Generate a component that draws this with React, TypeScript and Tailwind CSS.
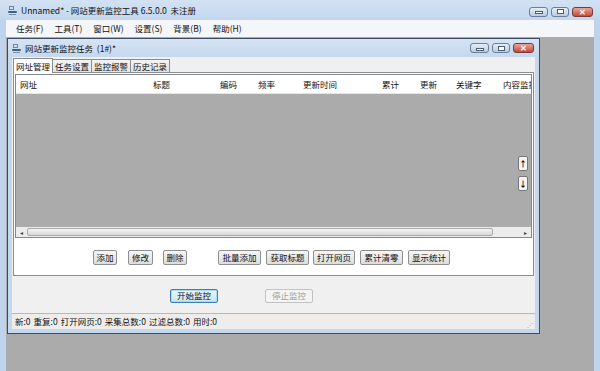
import React from "react";

const FONT = { fontFamily: '"Noto Sans CJK SC", "Liberation Sans", sans-serif' };

function AppIcon() {
  return (
    <svg width="11" height="11" viewBox="0 0 11 11" className="shrink-0">
      <rect x="2" y="1" width="5" height="4" fill="#6b87a8" />
      <rect x="3" y="2" width="3" height="2" fill="#cfe0f2" />
      <rect x="1" y="6" width="9" height="2" rx="1" fill="#3f5f86" />
      <rect x="2" y="9" width="7" height="1" fill="#7a8fa8" />
    </svg>
  );
}

function WinButtons() {
  const base =
    "flex items-center justify-center border border-[#6d7f96] rounded-[3px] bg-gradient-to-b from-[#e6eef8] to-[#b9cbe2] h-[10px]";
  return (
    <div className="flex gap-[3px]">
      <div className={`${base} w-[19px]`}>
        <div className="w-[8px] h-[3px] bg-white border border-[#4b5d73] mt-[2px]" />
      </div>
      <div className={`${base} w-[18px]`}>
        <div className="w-[7px] h-[5px] bg-white border border-[#4b5d73]" />
      </div>
      <div className="flex items-center justify-center border border-[#7a3a3a] rounded-[3px] bg-gradient-to-b from-[#e8a595] to-[#c2483a] text-white font-bold text-[8px] leading-none w-[21px] h-[10px]">
        ✕
      </div>
    </div>
  );
}

function Btn({ children, w, className = "" }: { children: React.ReactNode; w: string; className?: string }) {
  return (
    <div
      className={`${w} h-[15px] flex items-center justify-center rounded-[2px] border border-[#8e8f8f] bg-gradient-to-b from-[#f6f6f6] to-[#dddddd] text-[8.5px] text-[#111] ${className}`}
    >
      {children}
    </div>
  );
}

const cols: [string, string][] = [
  ["网址", "w-[133px]"],
  ["标题", "w-[67px]"],
  ["编码", "w-[38px]"],
  ["频率", "w-[45px]"],
  ["更新时间", "w-[79px]"],
  ["累计", "w-[38px]"],
  ["更新", "w-[36px]"],
  ["关键字", "w-[47px]"],
  ["内容监控", "flex-1"],
];

export default function App() {
  return (
    <div className="w-[600px] h-[371px] overflow-hidden flex flex-col bg-[#bfd4ec] text-[#111]" style={FONT}>
      {/* title bar */}
      <div className="h-[20px] shrink-0 flex items-center bg-gradient-to-b from-[#d3e2f3] to-[#c3d7ee] pl-[7px] pr-[7px]">
        <AppIcon />
        <span className="ml-[3px] text-[8.5px] whitespace-pre">Unnamed* - 网站更新监控工具 6.5.0.0  未注册</span>
        <div className="ml-auto mt-[3px]">
          <WinButtons />
        </div>
      </div>

      <div className="flex-1 flex px-[6px] min-h-0">
        <div className="flex-1 flex flex-col min-w-0">
          {/* menu */}
          <div className="h-[17px] shrink-0 flex items-center bg-[#f4f6f9] text-[8.5px] pl-[10px] gap-[11px]">
            <span>任务(F)</span>
            <span>工具(T)</span>
            <span>窗口(W)</span>
            <span>设置(S)</span>
            <span>背景(B)</span>
            <span>帮助(H)</span>
          </div>

          {/* MDI area */}
          <div className="flex-1 bg-[#ababab] pt-[1px] pl-[1px] min-h-0">
            {/* child window */}
            <div className="w-[533px] h-[296px] border border-[#3c4c60] bg-[#c3d7ee] flex flex-col">
              <div className="h-[18px] shrink-0 flex items-center bg-gradient-to-b from-[#d6e4f4] to-[#c5d8ee] pl-[3px] pr-[5px]">
                <AppIcon />
                <span className="ml-[3px] text-[8.5px] whitespace-pre">网站更新监控任务  (1#)*</span>
                <div className="ml-auto">
                  <WinButtons />
                </div>
              </div>
              <div className="flex-1 mx-[4px] mb-[4px] bg-[#f0f0f0] flex flex-col min-h-0">
                {/* tabs */}
                <div className="h-[15px] shrink-0 flex items-end pl-[1px] text-[8.5px]">
                  <div className="h-[15px] w-[40px] flex items-center justify-center bg-white border border-b-0 border-[#8c8c8c] relative top-[1px] z-10">
                    网址管理
                  </div>
                  {["任务设置", "监控报警", "历史记录"].map((t) => (
                    <div
                      key={t}
                      className="h-[13px] w-[39px] flex items-center justify-center bg-gradient-to-b from-[#f3f3f3] to-[#e3e3e3] border border-l-0 border-b-0 border-[#8c8c8c]"
                    >
                      {t}
                    </div>
                  ))}
                </div>
                {/* tab page */}
                <div className="h-[204px] shrink-0 mx-[1px] bg-white border border-[#8c8c8c] flex flex-col px-[1px] pt-[1px]">
                  <div className="h-[164px] border border-[#828790] flex flex-col">
                    <div className="h-[19px] shrink-0 flex items-center bg-white text-[8.5px] border-b border-[#e5e5e5]">
                      {cols.map(([c, w]) => (
                        <div key={c} className={`${w} pl-[4px] whitespace-nowrap overflow-hidden`}>
                          {c}
                        </div>
                      ))}
                    </div>
                    <div className="flex-1 bg-[#ababab] flex flex-col items-end pr-[3px] pt-[62px] gap-[5px]">
                      <div className="w-[10px] h-[15px] border border-[#777] bg-[#f4f4f4] rounded-[2px] flex items-center justify-center text-[8px] leading-none font-bold">
                        ↑
                      </div>
                      <div className="w-[10px] h-[15px] border border-[#777] bg-[#f4f4f4] rounded-[2px] flex items-center justify-center text-[8px] leading-none font-bold">
                        ↓
                      </div>
                    </div>
                    <div className="h-[10px] shrink-0 flex bg-[#ececec]">
                      <div className="w-[11px] flex items-center justify-center text-[6px] text-[#444]">◂</div>
                      <div className="w-[466px] my-[1px] rounded-[2px] border border-[#a9a9a9] bg-gradient-to-b from-[#f4f4f4] to-[#d6d6d6]" />
                      <div className="flex-1" />
                      <div className="w-[11px] flex items-center justify-center text-[6px] text-[#444]">▸</div>
                    </div>
                  </div>
                  {/* button row */}
                  <div className="flex items-center mt-[12px] ml-[78px]">
                    <Btn w="w-[24px]">添加</Btn>
                    <Btn w="w-[25px]" className="ml-[11px]">修改</Btn>
                    <Btn w="w-[24px]" className="ml-[10px]">删除</Btn>
                    <Btn w="w-[43px]" className="ml-[31px]">批量添加</Btn>
                    <Btn w="w-[43px]" className="ml-[5px]">获取标题</Btn>
                    <Btn w="w-[42px]" className="ml-[4px]">打开网页</Btn>
                    <Btn w="w-[43px]" className="ml-[5px]">累计清零</Btn>
                    <Btn w="w-[42px]" className="ml-[5px]">显示统计</Btn>
                  </div>
                </div>
                {/* start/stop */}
                <div className="flex-1 flex items-center pl-[158px] pt-[2px]">
                  <div className="w-[48px] h-[14px] flex items-center justify-center rounded-[2px] border border-[#3c7fb1] bg-gradient-to-b from-[#eaf6fd] to-[#c6e4f7] text-[8.5px] shadow-[inset_0_0_0_1px_#a8dbf7]">
                    开始监控
                  </div>
                  <div className="ml-[47px] w-[48px] h-[14px] flex items-center justify-center rounded-[2px] border border-[#c2c2c2] bg-[#f4f4f4] text-[8.5px] text-[#a0a0a0]">
                    停止监控
                  </div>
                </div>
                {/* status bar */}
                <div className="h-[16px] shrink-0 flex items-center border-t border-[#b8b8b8] bg-[#efedeb] text-[8.5px] pl-[3px] gap-[3px] relative">
                  <span>新:0</span>
                  <span>重复:0</span>
                  <span>打开网页:0</span>
                  <span>采集总数:0</span>
                  <span>过滤总数:0</span>
                  <span>用时:0</span>
                  <span className="absolute right-[2px] bottom-[1px] text-[6px] leading-none text-[#999]">⋰</span>
                </div>
              </div>
            </div>
          </div>
        </div>
      </div>
    </div>
  );
}
